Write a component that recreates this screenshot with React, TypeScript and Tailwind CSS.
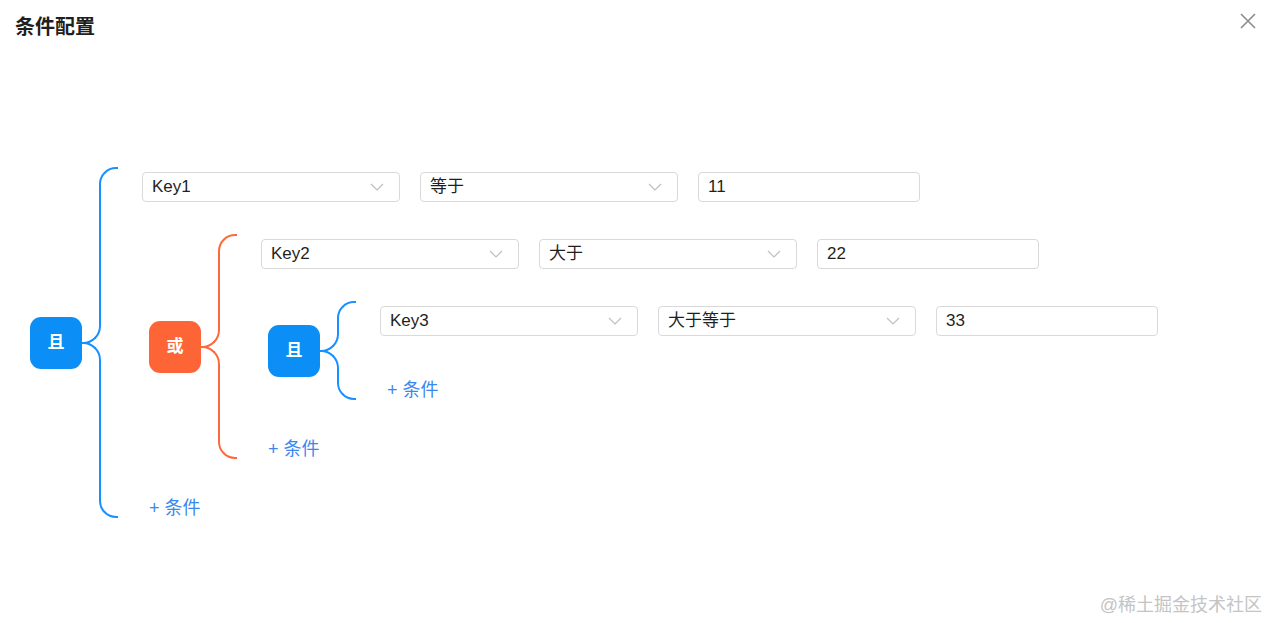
import React from 'react';

type Cond = { key: string; op: string; value: string };
type Node =
  | { type: 'cond'; cond: Cond }
  | { type: 'group'; logic: 'and' | 'or'; children: Node[] };

const tree: Node = {
  type: 'group',
  logic: 'and',
  children: [
    { type: 'cond', cond: { key: 'Key1', op: '等于', value: '11' } },
    {
      type: 'group',
      logic: 'or',
      children: [
        { type: 'cond', cond: { key: 'Key2', op: '大于', value: '22' } },
        {
          type: 'group',
          logic: 'and',
          children: [{ type: 'cond', cond: { key: 'Key3', op: '大于等于', value: '33' } }],
        },
      ],
    },
  ],
};

const Chevron = () => (
  <svg width="14" height="8" viewBox="0 0 14 8" fill="none" className="shrink-0">
    <path d="M1 1l6 6 6-6" stroke="#bfbfbf" strokeWidth="1.2" />
  </svg>
);

const Select = ({ value }: { value: string }) => (
  <div className="w-[258px] h-[30px] border border-[#d9d9d9] rounded-[4px] bg-white flex items-center justify-between pl-[9px] pr-[15px] text-[17px] text-[#1f1f1f]">
    <span>{value}</span>
    <Chevron />
  </div>
);

const CondRow = ({ cond }: { cond: Cond }) => (
  <div className="flex items-center gap-[20px]">
    <Select value={cond.key} />
    <Select value={cond.op} />
    <div className="w-[222px] h-[30px] border border-[#d9d9d9] rounded-[4px] bg-white flex items-center pl-[9px] text-[17px] text-[#1f1f1f]">
      {cond.value}
    </div>
  </div>
);

// curly brace made of bordered pieces, stretches with the group height
const Bracket = ({ color }: { color: string }) => (
  <div className="flex flex-col w-[36px] self-stretch shrink-0">
    <div className="flex-1 flex flex-col">
      <div className="flex-1 flex">
        <div className="w-[17px]" />
        <div className="flex-1 border-l-2 border-t-2 rounded-tl-[17px]" style={{ borderColor: color }} />
      </div>
      <div className="h-[18px] w-[19px] border-r-2 border-b-2 rounded-br-[18px]" style={{ borderColor: color }} />
    </div>
    <div className="flex-1 flex flex-col -mt-[2px]">
      <div className="h-[18px] w-[19px] border-r-2 border-t-2 rounded-tr-[18px]" style={{ borderColor: color }} />
      <div className="flex-1 flex">
        <div className="w-[17px]" />
        <div className="flex-1 border-l-2 border-b-2 rounded-bl-[17px]" style={{ borderColor: color }} />
      </div>
    </div>
  </div>
);

const Group = ({ node }: { node: Extract<Node, { type: 'group' }> }) => {
  const isOr = node.logic === 'or';
  const color = isOr ? '#fb6a3c' : '#1890ff';
  const last = node.children[node.children.length - 1];
  return (
    <div className="flex items-center">
      <div
        className={`w-[52px] h-[52px] rounded-[11px] flex items-center justify-center text-white font-bold text-[17px] shrink-0 ${
          isOr ? 'bg-[#fd6537]' : 'bg-[#0b8ff6]'
        }`}
      >
        {isOr ? '或' : '且'}
      </div>
      <Bracket color={color} />
      <div className="flex flex-col items-start pt-[5px] ml-[24px]">
        {node.children.map((child, i) =>
          child.type === 'cond' ? (
            <div key={i} className="mb-[32px]">
              <CondRow cond={child.cond} />
            </div>
          ) : (
            <div key={i} className="ml-[7px] mb-[39px]">
              <Group node={child} />
            </div>
          )
        )}
        <button
          className={`ml-[7px] h-[20px] leading-[20px] text-[18px] text-[#3b87f0] ${
            last.type === 'cond' ? 'mt-[12px]' : 'mt-0'
          }`}
        >
          + 条件
        </button>
      </div>
    </div>
  );
};

export default function App() {
  return (
    <div
      className="w-[1267px] h-[623px] bg-white flex flex-col overflow-hidden"
      style={{ fontFamily: '"Helvetica", "Liberation Sans", "Noto Sans CJK SC", sans-serif' }}
    >
      <div className="flex items-center justify-between h-[54px] pl-[15px] pr-[9px]">
        <h1 className="text-[20px] font-bold text-[#1f1f1f]">条件配置</h1>
        <svg width="20" height="20" viewBox="0 0 20 20" fill="none" className="mb-[12px]">
          <path d="M3 3l14 14M17 3L3 17" stroke="#8c8c8c" strokeWidth="1.6" />
        </svg>
      </div>
      <div className="flex-1 pt-[113px] pl-[30px]">
        <Group node={tree as Extract<Node, { type: 'group' }>} />
      </div>
      <div className="flex justify-end pr-[5px] pb-[4px] text-[18px] text-[#c4c4c4]">@稀土掘金技术社区</div>
    </div>
  );
}
